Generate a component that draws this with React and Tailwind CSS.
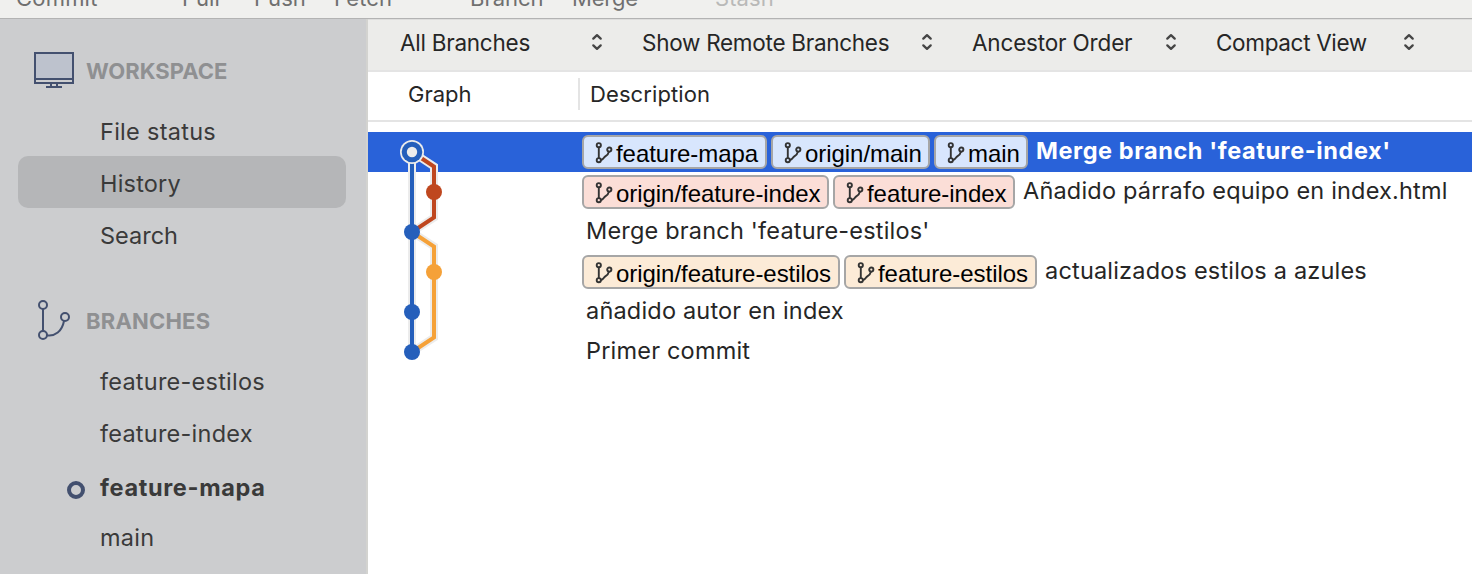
import React from "react";

const TOOLBAR = [
  { label: "Commit", cls: "w-[166px] tracking-[0.2px]" },
  { label: "Pull", cls: "w-[72px] tracking-[0px]" },
  { label: "Push", cls: "w-[80px] tracking-[0.05px]" },
  { label: "Fetch", cls: "w-[136px] tracking-[0.1px]" },
  { label: "Branch", cls: "w-[102px] tracking-[0px]" },
  { label: "Merge", cls: "w-[143px] tracking-[-0.2px]" },
  { label: "Stash", cls: "w-[80px] tracking-[0.1px] text-[#b9b9b8]" },
];

const FILTERS = [
  { label: "All Branches", cls: "w-[203px] tracking-[-0.25px]" },
  { label: "Show Remote Branches", cls: "w-[291px] tracking-[-0.28px]" },
  { label: "Ancestor Order", cls: "w-[205px] tracking-[-0.17px]" },
  { label: "Compact View", cls: "w-[199px] tracking-[-0.33px]" },
];

const COMMITS = [
  {
    selected: true,
    tags: [
      { name: "feature-mapa", cls: "w-[185px] bg-[#d8e6fd]" },
      { name: "origin/main", cls: "w-[159px] bg-[#d8e6fd]" },
      { name: "main", cls: "w-[94px] bg-[#d8e6fd]" },
    ],
    message: "Merge branch 'feature-index'",
  },
  {
    tags: [
      { name: "origin/feature-index", cls: "w-[247px] bg-[#fbded7]" },
      { name: "feature-index", cls: "w-[182px] bg-[#fbded7]" },
    ],
    message: "Añadido párrafo equipo en index.html",
  },
  { tags: [], message: "Merge branch 'feature-estilos'" },
  {
    tags: [
      { name: "origin/feature-estilos", cls: "w-[258px] bg-[#fcebd7]" },
      { name: "feature-estilos", cls: "w-[193px] bg-[#fcebd7]" },
    ],
    message: "actualizados estilos a azules",
  },
  { tags: [], message: "añadido autor en index" },
  { tags: [], message: "Primer commit" },
];

function Chevrons() {
  return (
    <svg className="-mt-[2px]" width="12" height="18" viewBox="0 0 12 18" fill="none" stroke="#454545" strokeWidth="2.3" strokeLinecap="round" strokeLinejoin="round">
      <path d="M2.3 5.6 L6 2.2 L9.7 5.6 M2.3 12.4 L6 15.8 L9.7 12.4" />
    </svg>
  );
}

function TagIcon() {
  return (
    <svg className="shrink-0" width="20" height="24" viewBox="0 0 20 24" fill="none" stroke="#333" strokeWidth="1.9">
      <circle cx="5.8" cy="5.2" r="2.1" />
      <circle cx="5.8" cy="20.2" r="2.1" />
      <circle cx="16.3" cy="9.6" r="2.1" />
      <path d="M5.8 7.3 V18.1 M7.9 20 C10.5 19.8 10.5 17.5 12.3 16.4 C14.6 15 15.6 13.8 15.9 11.7" />
    </svg>
  );
}

function Graph() {
  return (
    <svg className="absolute left-0 top-0" width="120" height="240" viewBox="0 0 120 240" fill="none">
      <g stroke="#ececec" strokeWidth="8">
        <path d="M44 20 V220" />
        <path d="M44 20 L66 34.5 V85.5 L44 100" />
        <path d="M44 100 L66 114.5 V205.5 L44 220" />
      </g>
      <path d="M44 20 L66 34.5 V85.5 L44 100" stroke="#bf471f" strokeWidth="4" />
      <path d="M44 100 L66 114.5 V205.5 L44 220" stroke="#f5a138" strokeWidth="4" />
      <path d="M44 20 V220" stroke="#255fbb" strokeWidth="4" />
      <circle cx="44" cy="20" r="12" fill="#ececec" />
      <circle cx="44" cy="20" r="10.3" fill="#255fbb" />
      <circle cx="44" cy="20" r="5.2" fill="#ececec" />
      <circle cx="66" cy="60" r="8" fill="#bf471f" />
      <circle cx="44" cy="100" r="8" fill="#255fbb" />
      <circle cx="66" cy="140" r="8" fill="#f5a138" />
      <circle cx="44" cy="180" r="8" fill="#255fbb" />
      <circle cx="44" cy="220" r="8" fill="#255fbb" />
    </svg>
  );
}

function Sidebar() {
  return (
    <aside className="w-[368px] shrink-0 border-r-2 border-[#d3d3d0] bg-[#cccdcf] pt-[31px] text-[23.5px] text-[#3a3a3a]">
      <div className="flex h-10 items-center pl-[34px]">
        <svg width="40" height="36" viewBox="0 0 40 36" fill="none" stroke="#43506f" strokeWidth="2">
          <rect x="1" y="1" width="38" height="30" fill="#bdc2cd" />
          <path d="M1 27 H39" />
          <path d="M2 29 H38" stroke="#cccdcf" />
          <path d="M17 32 V35 M23 32 V35 M12 35 H28" />
        </svg>
        <h2 className="ml-[12px] mt-[2px] text-[22px] font-bold text-[#8f9092]">WORKSPACE</h2>
      </div>
      <ul className="ml-[18px] mr-[20px] mt-[14px] leading-[55px]">
        <li className="h-[52px] pl-[82px] tracking-[0.28px]">File status</li>
        <li className="h-[52px] rounded-[10px] bg-[#b5b6b8] pl-[82px] tracking-[0.2px]">History</li>
        <li className="h-[52px] pl-[82px]">Search</li>
      </ul>
      <div className="mt-[40px] flex h-10 items-center pl-[37px]">
        <svg width="34" height="40" viewBox="0 0 34 40" fill="none" stroke="#43506f" strokeWidth="2">
          <circle cx="6" cy="5" r="4" />
          <circle cx="6" cy="35" r="4" />
          <circle cx="28" cy="17" r="4" />
          <path d="M6 9 V31 M10 35.3 C18 36.5 25 31.5 27 21" />
        </svg>
        <h2 className="ml-[15px] mt-[2px] text-[22px] font-bold tracking-[0.2px] text-[#8f9092]">BRANCHES</h2>
      </div>
      <ul className="mt-[15px] pl-[100px] leading-[54px] tracking-[0.24px]">
        <li className="h-[52px]">feature-estilos</li>
        <li className="h-[53px]">feature-index</li>
        <li className="relative h-[51px] font-bold leading-[56px] tracking-[0.65px]">
          <span className="absolute -left-[33px] top-[21px] size-[18px] rounded-full border-4 border-[#43506f]" />
          feature-mapa
        </li>
        <li className="h-[52px]">main</li>
      </ul>
    </aside>
  );
}

export default function App() {
  return (
    <div className="flex h-[574px] w-[1472px] flex-col overflow-hidden bg-white font-[Inter,sans-serif] text-[#262626]">
      <header className="flex h-[18px] shrink-0 overflow-hidden bg-[#f0f0ee] pl-[16px] text-[22px] leading-[24px] text-[#6f6f6f]">
        {TOOLBAR.map((t) => (
          <span key={t.label} className={"-mt-[14px] shrink-0 " + t.cls}>{t.label}</span>
        ))}
      </header>
      <div className="h-px shrink-0 bg-[#b3b3b3]" />
      <div className="flex min-h-0 flex-1">
        <Sidebar />
        <main className="flex flex-1 flex-col">
          <div className="flex h-[53px] shrink-0 border-b-2 border-t border-b-[#e4e4e4] border-t-[#dededd] bg-[#ececea] pl-[32px] text-[22.5px]">
            {FILTERS.map((f) => (
              <div key={f.label} className="mr-[39px] flex h-[45px] shrink-0 items-center last:mr-0">
                <div className={"flex items-center justify-between " + f.cls}>
                  <span>{f.label}</span>
                  <Chevrons />
                </div>
              </div>
            ))}
          </div>
          <div className="flex h-[50px] shrink-0 items-start border-b-2 border-[#e4e4e4] pt-[6px] text-[22px] leading-[32px]">
            <div className="w-[212px] border-r-2 border-[#e4e4e4] pl-[40px]">Graph</div>
            <div className="pl-[10px] tracking-[0.1px]">Description</div>
          </div>
          <div className="relative mt-[10px]">
            {COMMITS.map((c) => (
              <div key={c.message} className={"flex h-10 items-center pl-[214px] " + (c.selected ? "bg-[#2962d9] text-white" : "")}>
                {c.tags.map((t) => (
                  <span key={t.name} className={"mr-[4px] flex h-[34px] shrink-0 items-center rounded-[6px] border-2 border-[#a6a6a6] pl-[9px] font-['Liberation_Sans',sans-serif] text-[24px] leading-[30px] text-black " + t.cls}>
                    <TagIcon />
                    <span className="ml-[3px] mt-[3px] tracking-[-0.05px]">{t.name}</span>
                  </span>
                ))}
                <span className={"ml-[4px] -mt-[3px] whitespace-nowrap text-[23.5px] " + (c.selected ? "font-bold tracking-[0.58px]" : "tracking-[0.19px]")}>{c.message}</span>
              </div>
            ))}
            <Graph />
          </div>
        </main>
      </div>
    </div>
  );
}
